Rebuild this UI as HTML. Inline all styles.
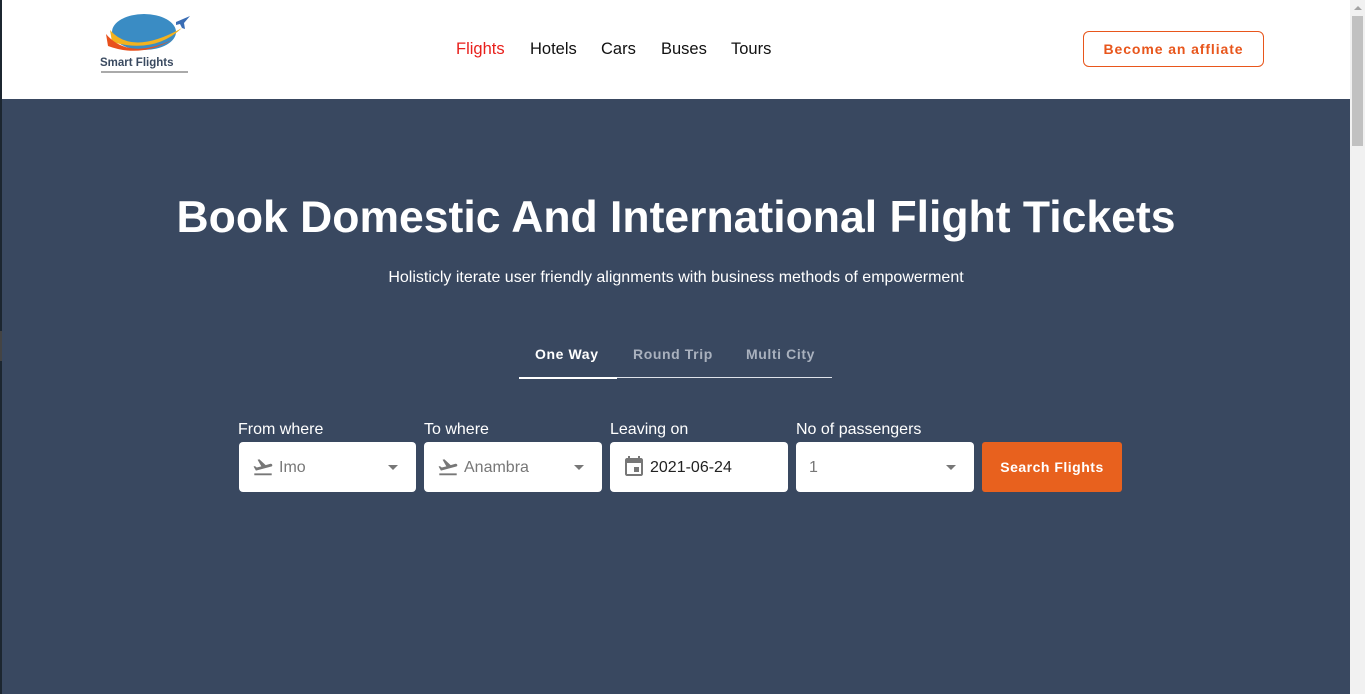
<!DOCTYPE html>
<html><head><meta charset="utf-8"><style>
*{box-sizing:border-box;margin:0;padding:0}
body{width:1365px;height:694px;overflow:hidden;font-family:"Liberation Sans",Arial,sans-serif;background:#fff;position:relative}
.lb{position:absolute;left:0;top:0;width:2px;height:694px;background:#1c2630}
.lb2{position:absolute;left:0;top:331px;width:2px;height:30px;background:#444}
.sb{position:absolute;right:0;top:0;width:15px;height:694px;background:#f1f1f1}
.sb .th{position:absolute;left:2px;top:16px;width:11px;height:130px;background:#c1c1c1}
.sb .ar{position:absolute;left:4px;top:6px;border-left:4px solid transparent;border-right:4px solid transparent;border-bottom:4px solid #a3a3a3}
header{position:absolute;left:2px;top:0;width:1348px;height:99px;background:#fff}
nav span{position:absolute;top:40px;font-size:16.5px;color:#111}
.aff{position:absolute;left:1081px;top:31px;width:181px;height:36px;border:1px solid #e8561c;border-radius:6px;color:#e8561c;font-weight:bold;font-size:14px;letter-spacing:.9px;text-align:center;line-height:34px}
.hero{position:absolute;left:2px;top:99px;width:1348px;height:595px;background:#394860;color:#fff}
h1{position:absolute;left:0;width:1348px;top:94px;text-align:center;font-size:44.5px;font-weight:bold}
.sub{position:absolute;left:0;width:1348px;top:170px;text-align:center;font-size:16px}
.tabs{position:absolute;left:517px;top:238px;width:313px;height:41px;border-bottom:1px solid #dfe3ea;font-size:14px;font-weight:bold;letter-spacing:.6px}
.tabs span{position:absolute;top:9px;color:#a9b1be}
.tabs .a{color:#fff}
.ul{position:absolute;left:0;bottom:-2px;width:98px;height:2px;background:#fff}
.lbl{position:absolute;top:322px;font-size:16px}
.f{position:absolute;top:343px;height:50px;background:#fff;border-radius:4px;color:#777;font-size:16px}
.f .t{position:absolute;left:40px;top:17px}
.f .dd{position:absolute;right:18px;top:23px;border-left:5px solid transparent;border-right:5px solid transparent;border-top:5px solid #777}
.f svg{position:absolute;left:12px;top:14px}
.btn{position:absolute;left:980px;top:343px;width:140px;height:50px;background:#e8611e;border-radius:3px;color:#fff;font-weight:bold;font-size:14px;text-align:center;line-height:50px;letter-spacing:.5px}
</style></head><body>
<div class="lb"></div><div class="lb2"></div>
<header>
<svg style="position:absolute;left:96px;top:10px" width="96" height="68" viewBox="0 0 96 68">
<ellipse cx="46" cy="22" rx="32" ry="18" fill="#3a8cc4"/>
<path d="M12 20 Q34 46 84 18 Q56 44 14 32Z" fill="#f3b21f"/>
<path d="M8 24 Q30 50 74 30 Q42 48 10 36Z" fill="#e8501c"/>
<path d="M78 12 l14 -6 l-6 7 l1 6 l-3 -1 l-2 -4 l-4 1z" fill="#3a6db4"/>
<text x="2" y="56" font-family="Liberation Sans,sans-serif" font-size="11.5" font-weight="bold" fill="#3a4a60">Smart Flights</text>
<line x1="3" y1="62" x2="90" y2="62" stroke="#555" stroke-width="1"/>
</svg>
<nav><span style="left:454px;color:#e8201c">Flights</span><span style="left:528px">Hotels</span><span style="left:599px">Cars</span><span style="left:659px">Buses</span><span style="left:729px">Tours</span></nav>
<div class="aff">Become an affliate</div>
</header>
<div class="hero">
<h1>Book Domestic And International Flight Tickets</h1>
<div class="sub">Holisticly iterate user friendly alignments with business methods of empowerment</div>
<div class="tabs"><span class="a" style="left:16px">One Way</span><span style="left:114px">Round Trip</span><span style="left:227px">Multi City</span><div class="ul"></div></div>
<div class="lbl" style="left:236px">From where</div>
<div class="lbl" style="left:422px">To where</div>
<div class="lbl" style="left:608px">Leaving on</div>
<div class="lbl" style="left:794px">No of passengers</div>
<div class="f" style="left:237px;width:177px"><svg width="24" height="22" viewBox="0 0 24 24"><path d="M2.5 19h19v2h-19zM22 9.6c-.2-.8-1-1.3-1.8-1.1L14.9 10 8 3.6l-1.9.5 4.1 7.2-5 1.3-2-1.5-1.5.4 2.6 4.5 16.8-4.5c.8-.2 1.3-1.1 1-1.9z" fill="#777"/></svg><span class="t">Imo</span><div class="dd"></div></div>
<div class="f" style="left:422px;width:178px"><svg width="24" height="22" viewBox="0 0 24 24"><path d="M2.5 19h19v2h-19zM22 9.6c-.2-.8-1-1.3-1.8-1.1L14.9 10 8 3.6l-1.9.5 4.1 7.2-5 1.3-2-1.5-1.5.4 2.6 4.5 16.8-4.5c.8-.2 1.3-1.1 1-1.9z" fill="#777"/></svg><span class="t">Anambra</span><div class="dd"></div></div>
<div class="f" style="left:608px;width:178px;color:#222"><svg width="24" height="24" viewBox="0 0 24 24" style="top:12px"><path d="M19 4h-1V2h-2v2H8V2H6v2H5c-1.1 0-2 .9-2 2v14c0 1.1.9 2 2 2h14c1.1 0 2-.9 2-2V6c0-1.1-.9-2-2-2zm0 16H5V9h14v11zM12 13h5v5h-5z" fill="#777"/></svg><span class="t">2021-06-24</span></div>
<div class="f" style="left:794px;width:178px"><span class="t" style="left:13px">1</span><div class="dd"></div></div>
<div class="btn">Search Flights</div>
</div>
<div class="sb"><div class="ar"></div><div class="th"></div></div>
</body></html>
